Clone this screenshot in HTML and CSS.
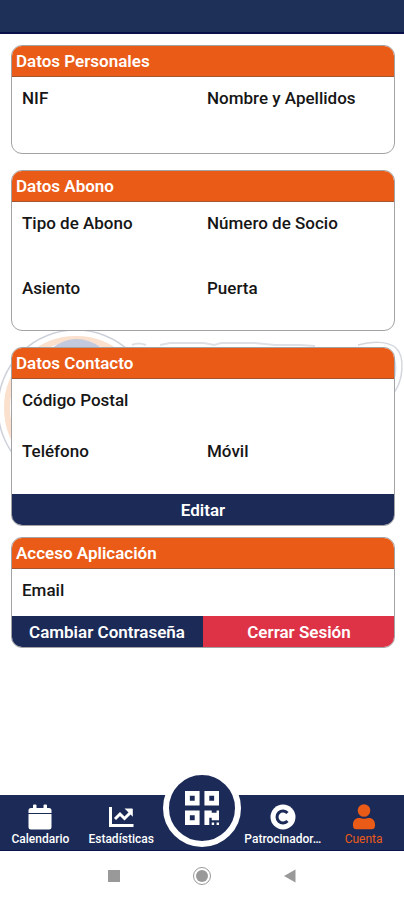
FILE: index.html
```html
<!DOCTYPE html>
<html lang="es">
<head>
<meta charset="utf-8">
<meta name="viewport" content="width=device-width, initial-scale=1">
<title>Cuenta</title>
<link rel="stylesheet" href="styles.css">
</head>
<body>
<header class="topbar"></header>
<main class="content">
  <svg class="watermark" viewBox="0 0 404 160" fill="none" aria-hidden="true">
    <circle cx="76" cy="80" r="78" stroke="#cdd2da" stroke-width="1.5"/>
    <circle cx="76" cy="80" r="69" stroke="#fbe0cd" stroke-width="6"/>
    <path d="M52 20Q76 2 102 20Z" fill="#c3cade"/>
    <path d="M132 17q6-3 14 0M160 17l10-2h34l10 2 7-2h34l20 2h26l14 1" stroke="#dde1e6" stroke-width="2"/>
    <path d="M358 17c14-4 30-4 38 3 9 8 8 34-4 47" stroke="#d3d7dd" stroke-width="1.5"/>
    <path d="M394 28q5 11 0 26z" fill="#d5ddec"/>
  </svg>
  <section class="card">
    <h2 class="card-title">Datos Personales</h2>
    <dl class="fields fields-personal">
      <div><dt>NIF</dt><dd></dd></div>
      <div><dt>Nombre y Apellidos</dt><dd></dd></div>
    </dl>
  </section>
  <section class="card">
    <h2 class="card-title">Datos Abono</h2>
    <dl class="fields fields-pass">
      <div><dt>Tipo de Abono</dt><dd></dd></div>
      <div><dt>Número de Socio</dt><dd></dd></div>
      <div><dt>Asiento</dt><dd></dd></div>
      <div><dt>Puerta</dt><dd></dd></div>
    </dl>
  </section>
  <section class="card card-contact">
    <h2 class="card-title">Datos Contacto</h2>
    <dl class="fields fields-contact">
      <div class="wide"><dt>Código Postal</dt><dd></dd></div>
      <div><dt>Teléfono</dt><dd></dd></div>
      <div><dt>Móvil</dt><dd></dd></div>
    </dl>
    <div class="actions"><button type="button" class="action">Editar</button></div>
  </section>
  <section class="card">
    <h2 class="card-title">Acceso Aplicación</h2>
    <dl class="fields fields-access">
      <div><dt>Email</dt><dd></dd></div>
    </dl>
    <div class="actions">
      <button type="button" class="action">Cambiar Contraseña</button>
      <button type="button" class="action danger">Cerrar Sesión</button>
    </div>
  </section>
</main>
<nav class="tabs" aria-label="Principal">
  <a class="tab" href="#calendario">
    <svg class="icon" viewBox="0 0 26 26" fill="currentColor" aria-hidden="true"><path d="M6 1.500a1 1 0 0 1 1-1h1.500a1 1 0 0 1 1 1V4h7V1.500a1 1 0 0 1 1-1H19a1 1 0 0 1 1 1V4h2a2.500 2.500 0 0 1 2.500 2.500V9h-23V6.500A2.500 2.500 0 0 1 4 4h2zM1.500 10h23V23a2.500 2.500 0 0 1-2.500 2.500H4A2.500 2.500 0 0 1 1.500 23z"/></svg>
    <span class="tab-label">Calendario</span>
  </a>
  <a class="tab" href="#estadisticas">
    <svg class="icon" viewBox="0 0 26 26" aria-hidden="true"><path d="M2.500 3v18.500H25.500" fill="none" stroke="currentColor" stroke-width="3"/><path d="M7 15l5-5 4.500 4.500L22 9" fill="none" stroke="currentColor" stroke-width="3"/><path d="M16.500 4.500H24a.8.8 0 0 1 .8.8v7.400z" fill="currentColor"/></svg>
    <span class="tab-label">Estadísticas</span>
  </a>
  <a class="tab tab-qr" href="#qr" aria-label="Código QR">
    <span class="qr">
      <svg class="qr-icon" viewBox="0 0 448 448" fill="currentColor" aria-hidden="true"><path fill-rule="evenodd" d="M0 192h192V0H0v192zM64 64h64v64H64V64zM256 0v192h192V0H256zm128 128h-64V64h64v64zM0 448h192V256H0v192zm64-128h64v64H64v-64zM416 256h32v128h-96v-32h-32v96h-64V256h96v32h64v-32zm0 160h32v32h-32v-32zm-64 0h32v32h-32v-32z"/></svg>
    </span>
  </a>
  <a class="tab" href="#patrocinadores">
    <svg class="icon" viewBox="0 0 26 26" aria-hidden="true"><circle cx="13" cy="13" r="12.500" fill="currentColor"/><path class="cut" d="M17.500 17a6 6 0 1 1 0-8" fill="none" stroke-width="3"/></svg>
    <span class="tab-label">Patrocinador…</span>
  </a>
  <a class="tab active" href="#cuenta" aria-current="page">
    <svg class="icon" viewBox="0 0 26 26" fill="currentColor" aria-hidden="true"><circle cx="13" cy="6.500" r="6.300"/><path d="M2 22v-1.500c0-4 2.500-6.500 6-6.500h1c2.500 1 5.500 1 8 0h1c3.500 0 6 2.500 6 6.500V22c0 2-1.500 3.300-3.300 3.300H5.300C3.500 25.300 2 24 2 22z"/></svg>
    <span class="tab-label">Cuenta</span>
  </a>
</nav>
<footer class="system">
  <button type="button" aria-label="Recientes"><svg viewBox="0 0 20 20" aria-hidden="true"><path d="M4 4h12v12H4z" fill="#999"/></svg></button>
  <button type="button" aria-label="Inicio"><svg viewBox="0 0 20 20" aria-hidden="true"><circle cx="10" cy="10" r="8.500" fill="none" stroke="#999" stroke-width="1"/><circle cx="10" cy="10" r="6" fill="#999"/></svg></button>
  <button type="button" aria-label="Atrás"><svg viewBox="0 0 20 20" aria-hidden="true"><path d="M15.500 3.500v13L4 10z" fill="#999"/></svg></button>
</footer>
</body>
</html>
```
FILE: styles.css
```css
:root {
  --navy: #1e2f58;
  --navy-deep: #1b2a57;
  --orange: #ea5b17;
  --red: #de3347;
}

* { box-sizing: border-box; }

body {
  margin: 0;
  min-height: 100vh;
  display: flex;
  flex-direction: column;
  background: #fff;
  color: #161616;
  font-family: Roboto, "Liberation Sans", sans-serif;
}

.topbar {
  height: 34px;
  background: var(--navy);
  border-bottom: 2px solid #0a0f4a;
}

.content {
  position: relative;
  flex: 1;
  display: flex;
  flex-direction: column;
  gap: 16px;
  padding: 11px 9px 16px 11px;
}

.watermark {
  position: absolute;
  left: 0;
  top: 294px;
  width: 100%;
}

.card {
  position: relative;
  border: 1px solid #a3a3a6;
  border-radius: 11px;
  background: #fff;
  overflow: hidden;
}

.card-contact { margin-bottom: -5px; }

.card-title {
  margin: -1px -1px 0;
  height: 32px;
  padding: 0 5px;
  background: var(--orange);
  border-bottom: 1px solid #a6562e;
  color: #fff;
  font-size: 17px;
  font-weight: 600;
  line-height: 32px;
}

.fields {
  margin: 0;
  padding: 11px 2px 0 10px;
  display: grid;
  grid-template-columns: 1fr 1fr;
  font-size: 17px;
  font-weight: 500;
  line-height: 20px;
}

.fields dd { margin: 0; }
.fields .wide { grid-column: 1 / -1; }
.fields-personal { grid-template-rows: 65px; }
.fields-pass { grid-template-rows: 65px 52px; }
.fields-contact { grid-template-rows: 51px 53px; }
.fields-access { grid-template-rows: 36px; }

.actions {
  display: flex;
  margin: 0 -1px -1px;
}

.action {
  flex: 1 1 0;
  height: 32px;
  padding: 0;
  border: 0;
  background: var(--navy-deep);
  color: #fff;
  font: 600 17px/32px Roboto, "Liberation Sans", sans-serif;
}

.danger { background: var(--red); }

.tabs {
  height: 56px;
  display: grid;
  grid-template-columns: repeat(5, minmax(0, 1fr));
  background: var(--navy-deep);
  border-bottom: 1px solid #0a1450;
}

.tab {
  display: flex;
  flex-direction: column;
  align-items: center;
  gap: 1px;
  padding-top: 9px;
  color: #fff;
  text-decoration: none;
}

.icon { width: 26px; height: 26px; }
.cut { stroke: var(--navy-deep); }

.tab-label {
  white-space: nowrap;
  font-size: 12px;
  font-weight: 500;
  line-height: 16px;
}

.active { color: var(--orange); }
.active .tab-label { font-weight: 400; }

.tab-qr { padding-top: 0; }

.qr {
  flex: none;
  display: flex;
  align-items: center;
  justify-content: center;
  width: 78px;
  height: 78px;
  margin-top: -26px;
  border: 6px solid #fff;
  border-radius: 50%;
  background: var(--navy-deep);
}

.qr-icon { width: 34px; height: 34px; }

.system {
  height: 49px;
  display: flex;
  align-items: center;
  justify-content: center;
  gap: 68px;
}

.system button {
  display: flex;
  padding: 0;
  border: 0;
  background: none;
}

.system svg { width: 20px; height: 20px; }
```
